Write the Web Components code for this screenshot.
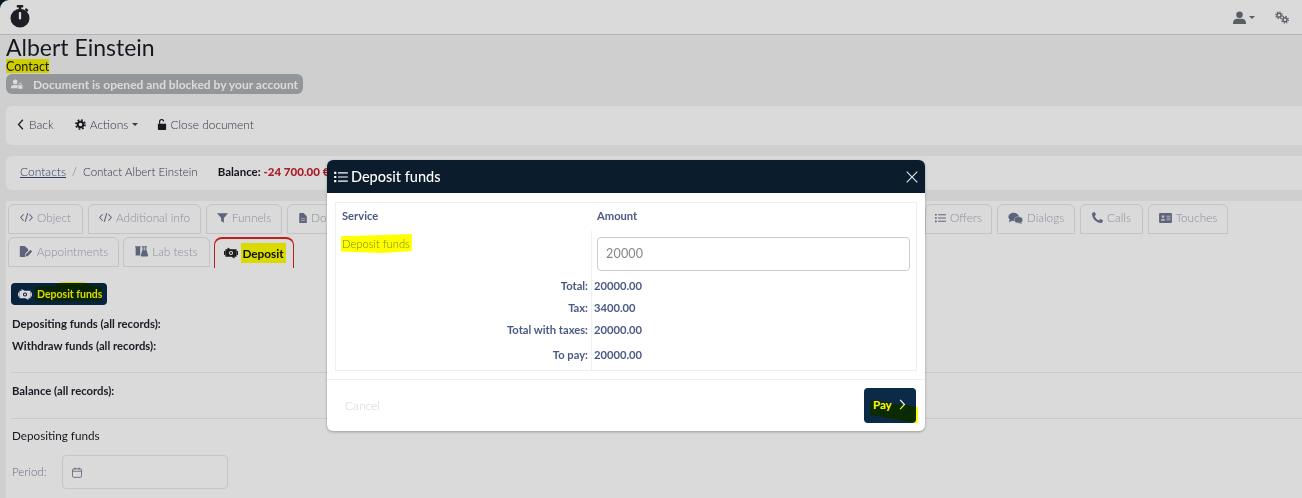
<!DOCTYPE html>
<html lang="en">
<head>
<meta charset="utf-8">
<title>Albert Einstein</title>
<style>
  html, body { margin: 0; height: 498px; overflow: hidden; }
  body { background: #f3f3f4; font-family: "Lato", "Liberation Sans", sans-serif; font-size: 12px; color: #3f4254; position: relative; }
</style>
</head>
<body>
<app-topbar></app-topbar>
<page-head></page-head>
<action-bar></action-bar>
<crumb-bar></crumb-bar>
<deposit-panel></deposit-panel>
<deposit-modal></deposit-modal>

<script>
const COG = `<circle cx="8" cy="8" r="4" fill="none" stroke="currentColor" stroke-width="2.800"/><circle cx="8" cy="8" r="6.600" fill="none" stroke="currentColor" stroke-width="2.400" stroke-dasharray="2.600 2.580"/>`;
const ICONS = {
  watch: `<svg viewBox="0 0 24 28"><rect x="8" y="0" width="8" height="3" rx="1"/><rect x="10.500" y="2" width="3" height="5"/><rect x="18" y="4.500" width="4" height="3" rx="1" transform="rotate(45 20 6)"/><circle cx="12" cy="16" r="11.500"/><rect x="10.600" y="8.500" width="2.800" height="9" rx="1.200" fill="#fff"/></svg>`,
  user: `<svg viewBox="0 0 16 16"><circle cx="8" cy="4.500" r="4"/><path d="M0 16v-1.500c0-3 2.500-5 5-5h6c2.500 0 5 2 5 5V16z"/></svg>`,
  userlock: `<svg viewBox="0 0 20 16"><circle cx="7" cy="4.500" r="4"/><path d="M0 15v-1.500C0 11 2 9.500 4.500 9.500h5c.5 0 1 .1 1.500.3V15z"/><path d="M12 10h7v6h-7z"/><path d="M13.500 10V8.500a2 2 0 0 1 4 0V10" fill="none" stroke="currentColor" stroke-width="1.300"/></svg>`,
  cog: `<svg viewBox="0 0 16 16">${COG}</svg>`,
  cogs: `<svg viewBox="0 0 20 18"><g transform="scale(.72)">${COG}</g><g transform="translate(8.500 6.500) scale(.72)">${COG}</g></svg>`,
  back: `<svg viewBox="0 0 8 14"><path d="M7 1 1.500 7 7 13" fill="none" stroke="currentColor" stroke-width="1.600"/></svg>`,
  next: `<svg viewBox="0 0 8 14"><path d="M1 1l5.500 6L1 13" fill="none" stroke="currentColor" stroke-width="1.500"/></svg>`,
  unlock: `<svg viewBox="0 0 14 16"><path d="M1 7h12v8a1 1 0 0 1-1 1H2a1 1 0 0 1-1-1z"/><path d="M3.500 7V4.200a3 3 0 0 1 6-.8" fill="none" stroke="currentColor" stroke-width="1.700"/></svg>`,
  code: `<svg viewBox="0 0 18 14"><path d="M5 2.500.9 7 5 11.500M13 2.500 17.100 7 13 11.500M10.800 1 7.200 13" fill="none" stroke="currentColor" stroke-width="1.500"/></svg>`,
  filter: `<svg viewBox="0 0 16 14"><path d="M0 0h16L10 7v7L6 11.500V7z"/></svg>`,
  file: `<svg viewBox="0 0 12 16"><path d="M0 1a1 1 0 0 1 1-1h6l5 5v10a1 1 0 0 1-1 1H1a1 1 0 0 1-1-1z"/><path d="M3 9h6M3 12h6" stroke="#dcdcdc" stroke-width="1.200"/></svg>`,
  list: `<svg viewBox="0 0 16 14"><path d="M0 1h2.500v2.400H0zM0 5.800h2.500v2.400H0zM0 10.600h2.500V13H0zM4.500 1.500H16v1.400H4.500zM4.500 6.300H16v1.400H4.500zM4.500 11.100H16v1.400H4.500z"/></svg>`,
  comments: `<svg viewBox="0 0 20 15"><ellipse cx="7.500" cy="6" rx="7" ry="5.500"/><path d="M2.500 9 1 13l5-2z"/><ellipse cx="14" cy="10" rx="5.500" ry="4.200" stroke="#dcdcdc" stroke-width=".8"/><path d="M17 13l2 2-5-1z"/></svg>`,
  phone: `<svg viewBox="0 0 14 14"><path d="M3.600 0 .8.800C.3 1 0 1.400 0 2c0 6.600 5.400 12 12 12 .6 0 1-.3 1.200-.8L14 10.400 10.500 8.900 8.900 10.800A10 10 0 0 1 3.200 5.100L5.100 3.500z"/></svg>`,
  card: `<svg viewBox="0 0 18 14"><rect width="18" height="14" rx="1.500"/><circle cx="5.500" cy="5" r="1.900" fill="#dcdcdc"/><path d="M2.500 11c0-2 1.200-3 3-3s3 1 3 3z" fill="#dcdcdc"/><path d="M10.500 4.500h5.500M10.500 7h5.500M10.500 9.500h5.500" stroke="#dcdcdc" stroke-width="1.200"/></svg>`,
  sign: `<svg viewBox="0 0 18 16"><path d="M0 1a1 1 0 0 1 1-1h6l5 4.500V7l-4 4v5H1a1 1 0 0 1-1-1z"/><path d="M9 15v-3l6.500-6.500 2.500 2.500L11.500 15z"/></svg>`,
  vials: `<svg viewBox="0 0 20 16"><path d="M0 0h9v1.500H8V14H1V1.500H0z"/><path d="M10.500 0h8v1.500h-1V5l2.500 8.500a1.500 1.500 0 0 1-1.500 2h-8a1.500 1.500 0 0 1-1.500-2L11.500 5V1.500h-1z"/><path d="M13.200 1.500h2.600V6h-2.600z" fill="#dcdcdc"/></svg>`,
  money: `<svg viewBox="0 0 20 16"><path fill-rule="evenodd" d="M2 2.500h16v11H2zM10 5a3 3 0 1 0 0 6 3 3 0 0 0 0-6z"/><circle cx="10" cy="8" r="1.500"/><path d="M5 0l4.500 2.800L5 5.500zM15 16l-4.500-2.800L15 10.500z"/><path d="M0 5h2v6H0zM18 5h2v6h-2z"/></svg>`,
  calendar: `<svg viewBox="0 0 12 13"><rect x=".6" y="2" width="10.800" height="10.300" rx="1.500" fill="none" stroke="currentColor"/><path d="M.6 5h10.800M3.500.5v3M8.500.5v3" fill="none" stroke="currentColor"/></svg>`,
  close: `<svg viewBox="0 0 12 12"><path d="M.7.700l10.600 10.600M11.300.700.700 11.300" fill="none" stroke="currentColor" stroke-width="1.100"/></svg>`
};

// glyph from the table above, sized by the w and h attributes
class UiIcon extends HTMLElement {
  connectedCallback() {
    const shadow = this.shadowRoot || this.attachShadow({ mode: 'open' });
    const w = this.getAttribute('w') || 14;
    const h = this.getAttribute('h') || 14;
    shadow.innerHTML = `
      <style>
        :host { display: inline-flex; width: ${w}px; height: ${h}px; flex: none; }
        svg { width: 100%; height: 100%; fill: currentColor; display: block; }
      </style>
      ${ICONS[this.getAttribute('name')] || ''}
    `;
  }
}
customElements.define('ui-icon', UiIcon);

// marker stroke somebody drew on the screenshot
class MarkerText extends HTMLElement {
  constructor() {
    super();
    const shadow = this.attachShadow({ mode: 'open' });
    shadow.innerHTML = `
      <style>
        :host { display: inline-block; position: relative; white-space: nowrap; }
        i { position: absolute; inset: var(--mark-inset, -1px -1px 0 -1px); background: #ffff00;
            mix-blend-mode: multiply; clip-path: var(--mark-clip, none); pointer-events: none; }
      </style>
      <slot></slot><i></i>
    `;
  }
}
customElements.define('marker-text', MarkerText);

class AppTopbar extends HTMLElement {
  constructor() {
    super();
    this.attachShadow({ mode: 'open' }).innerHTML = `
      <style>
        :host { display: block; background: #0b1c2c; }
        .bar { height: 34px; box-sizing: content-box; background: #fff; border-bottom: 1px solid #d4d4d6;
               border-top-left-radius: 9px; display: flex; align-items: center; padding: 0 13px 0 10px; color: #2b2b33; }
        .logo { color: #23252b; margin-top: -1px; }
        .right { margin-left: auto; display: flex; align-items: center; gap: 20px; color: #6a6f78; }
        .user { display: flex; align-items: center; gap: 3px; }
        .caret { width: 0; height: 0; border: 3px solid transparent; border-top-color: currentColor; border-bottom: 0; }
      </style>
      <div class="bar">
        <ui-icon class="logo" name="watch" w="20" h="23"></ui-icon>
        <div class="right">
          <span class="user"><ui-icon name="user" w="13" h="13"></ui-icon><span class="caret"></span></span>
          <ui-icon name="cogs" w="14" h="13"></ui-icon>
        </div>
      </div>
    `;
  }
}
customElements.define('app-topbar', AppTopbar);

class PageHead extends HTMLElement {
  constructor() {
    super();
    this.attachShadow({ mode: 'open' }).innerHTML = `
      <style>
        :host { display: flow-root; padding: 0 6px; height: 71px; }
        h1 { margin: -1px 0 0; font-size: 23px; font-weight: 400; line-height: 26px; color: #1c1d25; }
        .kind { font-size: 12.500px; line-height: 13px; color: #1c1d25; margin-bottom: 1px; display: block; }
        marker-text { --mark-inset: -1px 0 0 0; }
        .lock { display: inline-flex; align-items: center; height: 20px; border-radius: 6px; background: #aeb1b5;
                color: #fff; font-weight: 700; font-size: 12px; padding: 0 5px; gap: 10px; }
      </style>
      <h1>Albert Einstein</h1>
      <span class="kind"><marker-text>Contact</marker-text></span>
      <span class="lock"><ui-icon name="userlock" w="12" h="10"></ui-icon>Document is opened and blocked by your account</span>
    `;
  }
}
customElements.define('page-head', PageHead);

class ActionBar extends HTMLElement {
  constructor() {
    super();
    this.attachShadow({ mode: 'open' }).innerHTML = `
      <style>
        :host { display: flex; align-items: center; box-sizing: border-box; height: 39px; margin-left: 6px; padding: 0 0 3px 11px; background: #fff;
                border-radius: 6px 0 0 6px; color: #3f4254; font-size: 12px; font-weight: 300; }
        span { display: inline-flex; align-items: center; }
        .back { gap: 5px; margin-right: 21px; }
        .actions { gap: 4px; margin-right: 19px; }
        .close { gap: 3px; font-size: 11.900px; }
        .caret { width: 0; height: 0; border: 3px solid transparent; border-top-color: currentColor; border-bottom: 0; }
        ui-icon { color: #1d1e26; }
      </style>
      <span class="back"><ui-icon name="back" w="7" h="11"></ui-icon>Back</span>
      <span class="actions"><ui-icon name="cog" w="11" h="11"></ui-icon>Actions<i class="caret"></i></span>
      <span class="close"><ui-icon name="unlock" w="10" h="11"></ui-icon>Close document</span>
    `;
  }
}
customElements.define('action-bar', ActionBar);

class CrumbBar extends HTMLElement {
  constructor() {
    super();
    this.attachShadow({ mode: 'open' }).innerHTML = `
      <style>
        :host { display: flex; align-items: center; box-sizing: border-box; height: 34px; margin: 11px 0 11px 6px; padding: 0 0 3px 14px; background: #fff;
                border-radius: 6px 0 0 6px; font-size: 11.500px; font-weight: 300; color: #3f4254; }
        a { color: #3f4a75; text-decoration: underline; font-size: 12px; }
        .sep { margin: 0 6px; color: #7e8299; }
        .bal { margin-left: 20px; font-weight: 700; color: #16171f; }
        b { color: #c8202f; }
      </style>
      <a>Contacts</a><span class="sep">/</span><span>Contact Albert Einstein</span>
      <span class="bal">Balance: <b>-24 700.00 €</b></span>
    `;
  }
}
customElements.define('crumb-bar', CrumbBar);

class TabItem extends HTMLElement {
  constructor() {
    super();
    this.attachShadow({ mode: 'open' }).innerHTML = `
      <style>
        :host { display: inline-flex; align-items: center; justify-content: center; gap: 4px; box-sizing: border-box;
                height: 30px; padding-bottom: 3px; border: 1px solid #e3e4e8; border-radius: 6px 6px 0 0;
                color: #a4a9bb; font-size: 11.800px; font-weight: 300; white-space: nowrap; overflow: hidden; }
        :host([active]) { height: 31px; padding-bottom: 1px; border: 1px solid #e1251b; border-top-width: 2px; border-bottom: 0; color: #111; font-weight: 700; border-radius: 8px 8px 0 0; overflow: visible; }
        ::slotted(ui-icon) { color: #6f7690; }
        :host([active]) ::slotted(ui-icon) { color: #222; }
      </style>
      <slot></slot>
    `;
  }
}
customElements.define('tab-item', TabItem);

class DepositPanel extends HTMLElement {
  constructor() {
    super();
    this.attachShadow({ mode: 'open' }).innerHTML = `
      <style>
        :host { display: block; margin-left: 6px; background: #fff; padding: 3px 0 0 2px; height: 297px; font-size: 11.300px; color: #1c1d25; }
        .row { display: flex; gap: 5px; }
        .row + .row { margin-top: 3px; gap: 4px; }
        .row + .row tab-item:not([active]) { padding-bottom: 2px; }
        .row + .row marker-text { --mark-inset: -3px -2px -2px -1px; }
        .spacer { flex: 0 0 568px; }
        .body { padding: 15px 0 0 3px; }
        .pay { display: inline-flex; align-items: center; gap: 5px; height: 22px; padding: 0 6px 0 7px; box-sizing: border-box; width: 96px;
               background: #0a2a48; color: #fff; border-radius: 4px; font-weight: 700; font-size: 10.500px; }
        .pay marker-text { --mark-inset: -6px 0 -3px -2px; --mark-clip: polygon(0 22%, 28% 20%, 40% 0, 72% 0, 84% 20%, 100% 22%, 100% 90%, 0 90%); }
        .line { font-weight: 700; line-height: 14px; color: #22232d; padding-left: 1px; }
        .first { margin-top: 12px; }
        .second { margin-top: 8px; }
        hr { border: 0; border-top: 1px solid #ebedf3; margin: 0; }
        .hr1 { margin-top: 19px; }
        .bal { margin-top: 11px; }
        .hr2 { margin-top: 20px; }
        .title { margin-top: 9px; padding-left: 1px; line-height: 14px; font-weight: 400; font-size: 11.700px; }
        .period { display: flex; align-items: center; gap: 16px; margin-top: 13px; padding-left: 1px; color: #7e8299; font-weight: 300; font-size: 11.500px; }
        .period .lbl { margin-top: -2px; }
        .input { width: 166px; height: 34px; box-sizing: border-box; border: 1px solid #e4e6ef; border-radius: 4px;
                 display: flex; align-items: center; padding-left: 9px; color: #6f7690; }
      </style>
      <div class="row">
        <tab-item style="width:75px"><ui-icon name="code" w="13" h="11"></ui-icon>Object</tab-item>
        <tab-item style="width:113px"><ui-icon name="code" w="13" h="11"></ui-icon>Additional info</tab-item>
        <tab-item style="width:76px"><ui-icon name="filter" w="11" h="10"></ui-icon>Funnels</tab-item>
        <tab-item style="width:60px;justify-content:flex-start;padding-left:11px"><ui-icon name="file" w="8" h="10"></ui-icon>Doc</tab-item>
        <span class="spacer"></span>
        <tab-item style="width:67px"><ui-icon name="list" w="11" h="10"></ui-icon>Offers</tab-item>
        <tab-item style="width:78px"><ui-icon name="comments" w="15" h="12"></ui-icon>Dialogs</tab-item>
        <tab-item style="width:63px"><ui-icon name="phone" w="11" h="11"></ui-icon>Calls</tab-item>
        <tab-item style="width:80px"><ui-icon name="card" w="13" h="10"></ui-icon>Touches</tab-item>
      </div>
      <div class="row">
        <tab-item style="width:111px"><ui-icon name="sign" w="14" h="11"></ui-icon>Appointments</tab-item>
        <tab-item style="width:87px"><ui-icon name="vials" w="13" h="11"></ui-icon>Lab tests</tab-item>
        <tab-item style="width:80px" active><ui-icon name="money" w="14" h="12"></ui-icon><marker-text>Deposit</marker-text></tab-item>
      </div>
      <div class="body">
        <span class="pay"><ui-icon name="money" w="14" h="11"></ui-icon><marker-text>Deposit funds</marker-text></span>
        <div class="line first">Depositing funds (all records):</div>
        <div class="line second">Withdraw funds (all records):</div>
        <hr class="hr1">
        <div class="line bal">Balance (all records):</div>
        <hr class="hr2">
        <div class="title">Depositing funds</div>
        <div class="period"><span class="lbl">Period:</span><span class="input"><ui-icon name="calendar" w="10" h="11"></ui-icon></span></div>
      </div>
    `;
  }
}
customElements.define('deposit-panel', DepositPanel);

class DepositModal extends HTMLElement {
  constructor() {
    super();
    this.attachShadow({ mode: 'open' }).innerHTML = `
      <style>
        :host { position: absolute; inset: 0; background: rgba(0,0,0,.145); display: block; z-index: 10; }
        .dialog { position: absolute; left: 327px; top: 160px; width: 598px; height: 271px; background: #fff; border-radius: 6px;
                  box-shadow: 0 1px 3px rgba(0,0,0,.3); display: flex; flex-direction: column; overflow: hidden; }
        header { height: 33px; background: #0b1c2c; color: #fff; display: flex; align-items: center; padding: 0 7px; gap: 3px;
                 font-size: 14.500px; font-weight: 500; flex: none; }
        header .x { margin-left: auto; color: #e8e8e8; }
        .body { padding: 9px 8px 8px; flex: 1; }
        .box { border: 1px solid #eeeff3; height: 169px; box-sizing: border-box; display: grid; grid-template-columns: 255px 1fr;
               grid-template-rows: 28px 45px repeat(3, 22px) 1fr; color: #4a5a85; font-size: 11.200px; font-weight: 700; }
        .box > * { padding: 0 6px; display: flex; align-items: center; }
        .col { border-left: 1px solid #eeeff3; }
        .head { padding-bottom: 3px; }
        .head2 { padding-left: 6px; }
        .service { font-weight: 300; align-items: flex-start; padding-top: 6px; }
        .service marker-text { --mark-inset: -3px -2px -3px -1px; --mark-clip: polygon(0 12%, 100% 0, 100% 90%, 60% 100%, 0 92%); color: #7b8a2a; }
        .amount { align-items: flex-start; padding-top: 6px; padding-left: 5px; box-sizing: border-box; }
        .field { width: 100%; height: 34px; box-sizing: border-box; border: 1px solid #c9ced6; border-radius: 4px; display: flex; align-items: center;
                 padding: 0 0 2px 8px; color: #85878d; font-weight: 400; font-size: 12.500px; letter-spacing: .2px; }
        .lbl { justify-content: flex-end; padding-right: 3px; padding-bottom: 4px; }
        .val { padding-left: 2px; padding-bottom: 4px; }
        footer { border-top: 1px solid #eeeff3; height: 51px; flex: none; display: flex; align-items: center; justify-content: space-between;
                 padding: 0 9px 0 18px; color: #d3d5dc; font-weight: 300; font-size: 12px; }
        .pay { position: relative; width: 52px; height: 35px; border-radius: 4px; background: #0a2a48; color: #fff; font-weight: 700; font-size: 11.500px;
               display: flex; align-items: center; gap: 7px; padding: 0 0 2px 9px; box-sizing: border-box; }
        .pay i { position: absolute; left: 6px; right: -2px; top: 12px; bottom: 0; background: #ffff00; mix-blend-mode: multiply;
                 clip-path: polygon(0 0, 100% 30%, 100% 100%, 96% 100%, 0 65%); }
      </style>
      <section class="dialog">
        <header><ui-icon name="list" w="14" h="12"></ui-icon>Deposit funds<ui-icon class="x" name="close" w="12" h="12"></ui-icon></header>
        <div class="body">
          <div class="box">
            <div class="head">Service</div><div class="head head2">Amount</div>
            <div class="service"><marker-text>Deposit funds</marker-text></div>
            <div class="amount col"><span class="field">20000</span></div>
            <div class="lbl">Total:</div><div class="val col">20000.00</div>
            <div class="lbl">Tax:</div><div class="val col">3400.00</div>
            <div class="lbl">Total with taxes:</div><div class="val col">20000.00</div>
            <div class="lbl">To pay:</div><div class="val col">20000.00</div>
          </div>
        </div>
        <footer><span>Cancel</span><span class="pay">Pay<ui-icon name="next" w="7" h="11"></ui-icon><i></i></span></footer>
      </section>
    `;
  }
}
customElements.define('deposit-modal', DepositModal);
</script>
</body>
</html>
